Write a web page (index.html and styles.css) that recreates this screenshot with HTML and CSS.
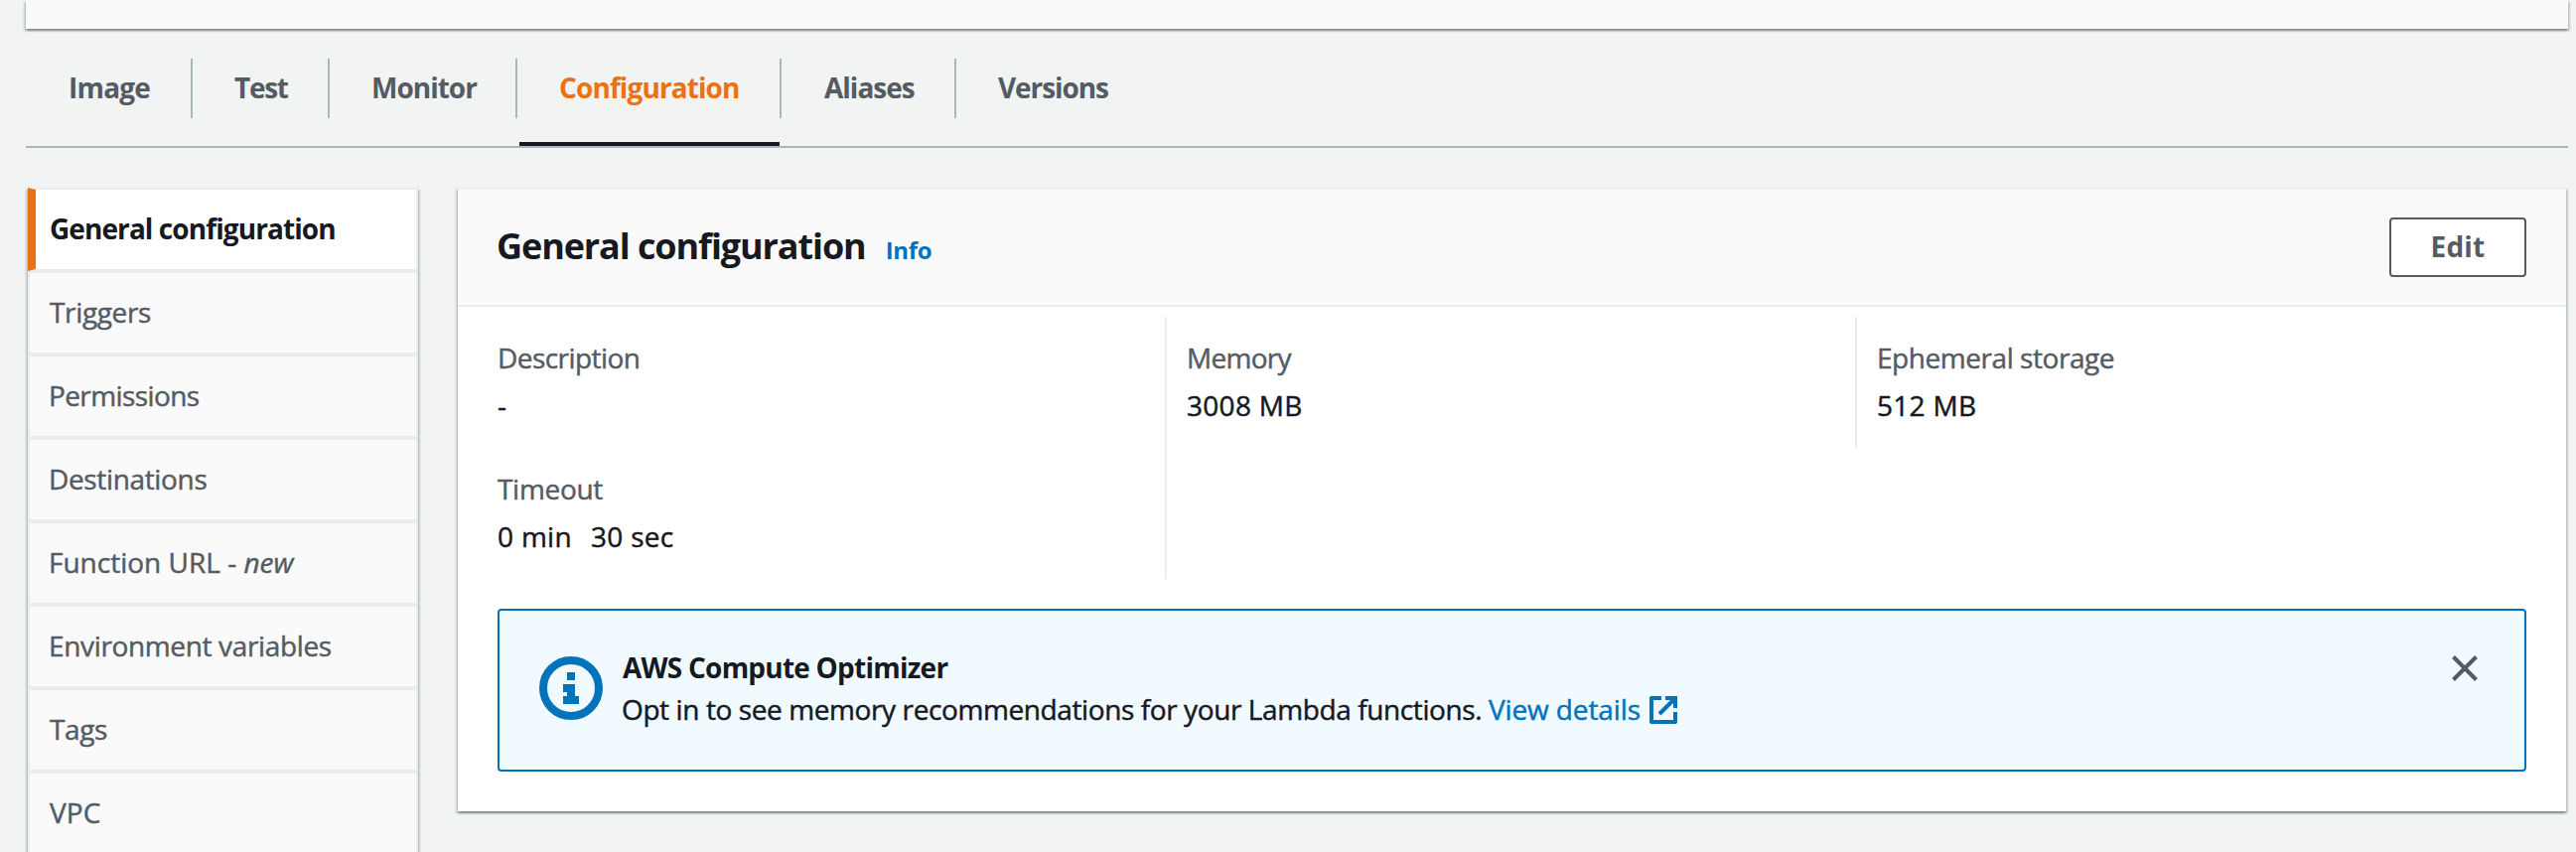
FILE: index.html
```
<!DOCTYPE html>
<html lang="en">
<head>
<meta charset="utf-8">
<title>General configuration</title>
<link rel="stylesheet" href="styles.css">
</head>
<body>
<div class="page">
  <div class="panel overview"></div>

  <nav class="tabs">
    <a class="tab tab-image"><span>Image</span></a>
    <a class="tab tab-test"><span>Test</span></a>
    <a class="tab tab-monitor"><span>Monitor</span></a>
    <a class="tab tab-configuration active"><span>Configuration</span></a>
    <a class="tab tab-aliases"><span>Aliases</span></a>
    <a class="tab tab-versions"><span>Versions</span></a>
  </nav>

  <div class="columns">
    <ul class="side">
      <li class="side-item side-general active">General configuration</li>
      <li class="side-item side-triggers">Triggers</li>
      <li class="side-item side-permissions">Permissions</li>
      <li class="side-item side-destinations">Destinations</li>
      <li class="side-item side-url">Function URL - <em>new</em></li>
      <li class="side-item side-env">Environment variables</li>
      <li class="side-item side-tags">Tags</li>
      <li class="side-item side-vpc">VPC</li>
    </ul>

    <section class="panel main">
      <header class="head">
        <div class="head-title"><h2>General configuration</h2><a class="info">Info</a></div>
        <button class="edit">Edit</button>
      </header>
      <div class="grid">
        <div class="cell"><div class="label label-description">Description</div><div class="value">-</div></div>
        <div class="cell divided"><div class="label label-memory">Memory</div><div class="value">3008 MB</div></div>
        <div class="cell divided"><div class="label label-storage">Ephemeral storage</div><div class="value">512 MB</div></div>
        <div class="cell"><div class="label label-timeout">Timeout</div><div class="value value-time"><span>0 min</span><span>30 sec</span></div></div>
        <div class="cell divided"></div>
      </div>
      <div class="alert">
        <svg class="alert-icon" viewBox="0 0 16 16"><circle cx="8" cy="8" r="7" fill="none" stroke="#0073bb" stroke-width="2"/><path fill="#0073bb" d="M7 4h2v2H7zM6 7h3v3h1v2H6v-2h1V9H6z"/></svg>
        <div class="alert-body">
          <div class="alert-title">AWS Compute Optimizer</div>
          <div class="alert-text"><span class="message">Opt in to see memory recommendations for your Lambda functions.</span><a class="link">View details</a><svg class="external" viewBox="0 0 16 16"><g fill="none" stroke="#0073bb" stroke-width="2"><path stroke-linejoin="round" d="M7 2H2v12h12V9"/><path d="M9 2h5v5M6 10l8-8"/></g></svg></div>
        </div>
        <svg class="close" viewBox="0 0 32 32"><path d="M4.500 4.500l23 23M27.500 4.500l-23 23" fill="none" stroke="#545b64" stroke-width="4"/></svg>
      </div>
    </section>
  </div>
</div>
</body>
</html>
```

FILE: styles.css
```
* { box-sizing: border-box; }

body {
  margin: 0;
  background: #f2f3f3;
  color: #16191f;
  font-family: "Open Sans", "Noto Sans", sans-serif;
  font-size: 28px;
}

.page { height: 858px; overflow: hidden; }

.panel {
  background: #fff;
  box-shadow: 0 2px 2px 0 rgba(0, 28, 36, 0.3), 2px 2px 2px 0 rgba(0, 28, 36, 0.15), -2px 2px 2px 0 rgba(0, 28, 36, 0.15);
}

.overview { height: 29px; margin: 0 8px 0 26px; background: #fafafa; }

/* Tabs */
.tabs {
  display: flex;
  height: 120px;
  margin: 0 8px 0 26px;
  padding-top: 30px;
  border-bottom: 2px solid #aab7b8;
}

.tab {
  display: flex;
  height: 88px;
  color: #545b64;
  font-weight: 700;
  line-height: 58px;
}

.tab span {
  height: 60px;
  width: 100%;
  border-right: 2px solid #aab7b8;
  white-space: nowrap;
}

.tab-image { width: 168px; padding-left: 43px; letter-spacing: -0.8px; }
.tab-test { width: 138px; padding-left: 42px; letter-spacing: -1.3px; }
.tab-monitor { width: 189px; padding-left: 42px; letter-spacing: -1px; }
.tab-configuration { width: 266px; padding-left: 42px; letter-spacing: -0.9px; }
.tab-aliases { width: 176px; padding-left: 43px; letter-spacing: -1px; }
.tab-versions { width: 200px; padding-left: 42px; letter-spacing: -1.1px; }
.tab-versions span { border-right: 0; }

.tab.active { color: #ec7211; background: linear-gradient(#16191f, #16191f) 2px 84px / 262px 4px no-repeat; }

/* Columns */
.columns { display: flex; align-items: flex-start; padding: 40px 10px 0 28px; }

.side {
  width: 393px;
  margin: 0 40px 0 0;
  padding: 0;
  list-style: none;
  box-shadow: 0 2px 2px 0 rgba(0, 28, 36, 0.3), 2px 2px 2px 0 rgba(0, 28, 36, 0.15), -2px 2px 2px 0 rgba(0, 28, 36, 0.15);
}

.side-item {
  height: 84px;
  padding-left: 19px;
  border: 2px solid #eaeded;
  background: #fafafa;
  color: #545b64;
  line-height: 78px;
  white-space: nowrap;
  -webkit-text-stroke: 0.45px currentColor;
}

.side-item.active {
  padding-left: 14px;
  border-left: 8px solid #ec7211;
  background: #fff;
  color: #16191f;
  font-weight: 700;
  -webkit-text-stroke: 0;
}

.side-general { letter-spacing: -0.92px; }
.side-triggers { padding-left: 20px; letter-spacing: -0.35px; }
.side-permissions { letter-spacing: -0.6px; }
.side-destinations { letter-spacing: -0.35px; }
.side-url { letter-spacing: 0; }
.side-env { letter-spacing: -0.35px; }
.side-tags { padding-left: 20px; letter-spacing: -0.4px; }
.side-vpc { padding-left: 20px; letter-spacing: 0.1px; }

.main {
  flex: 1;
  height: 628px;
  border-top: 2px solid #eaeded;
}

.head {
  display: flex;
  align-items: center;
  justify-content: space-between;
  height: 118px;
  padding: 0 40px;
  border-bottom: 2px solid #eaeded;
  background: #fafafa;
}

.head-title { display: flex; align-items: baseline; padding-bottom: 2px; }

h2 { margin: 0 20px 0 -1px; font-size: 36px; line-height: 44px; letter-spacing: -1.1px; }

.info { color: #0073bb; font-size: 24px; font-weight: 700; letter-spacing: -0.3px; }

.edit {
  width: 138px;
  height: 60px;
  padding: 0 0 2px;
  border: 2px solid #545b64;
  border-radius: 4px;
  background: #fff;
  color: #545b64;
  font: 700 28px/54px "Open Sans", "Noto Sans", sans-serif;
  letter-spacing: 0.2px;
}

/* Settings */
.grid {
  display: grid;
  grid-template-columns: 712px 695px 1fr;
  grid-auto-rows: 132px;
  padding-top: 10px;
}

.cell { padding: 17px 0 0 40px; line-height: 48px; white-space: nowrap; -webkit-text-stroke: 0.45px currentColor; }
.cell.divided { padding-left: 20px; border-left: 2px solid #eaeded; }

.label { color: #545b64; }
.label-description { letter-spacing: -0.55px; }
.label-memory { letter-spacing: -0.7px; }
.label-storage { letter-spacing: -0.45px; }
.label-timeout { letter-spacing: -0.3px; }
.value { letter-spacing: 0.3px; }
.value-time { display: flex; gap: 19px; }

/* Notice */
.alert {
  display: flex;
  height: 164px;
  margin: 30px 40px 0;
  border: 2px solid #0073bb;
  border-radius: 4px;
  background: #f1faff;
}

.alert-icon { width: 64px; height: 64px; margin: 46px 18px 0 40px; }
.alert-body { flex: 1; padding-top: 36px; line-height: 42px; white-space: nowrap; }
.alert-title { padding-left: 2px; font-weight: 700; letter-spacing: -0.77px; }
.alert-text { display: flex; -webkit-text-stroke: 0.45px currentColor; }
.message { width: 873px; padding-left: 1px; letter-spacing: -0.4px; }
.link { width: 161px; padding-left: 1px; color: #0073bb; letter-spacing: -0.12px; }
.external { width: 32px; height: 32px; margin-top: 6px; }
.close { width: 32px; height: 32px; margin: 42px 44px 0 0; }
```
